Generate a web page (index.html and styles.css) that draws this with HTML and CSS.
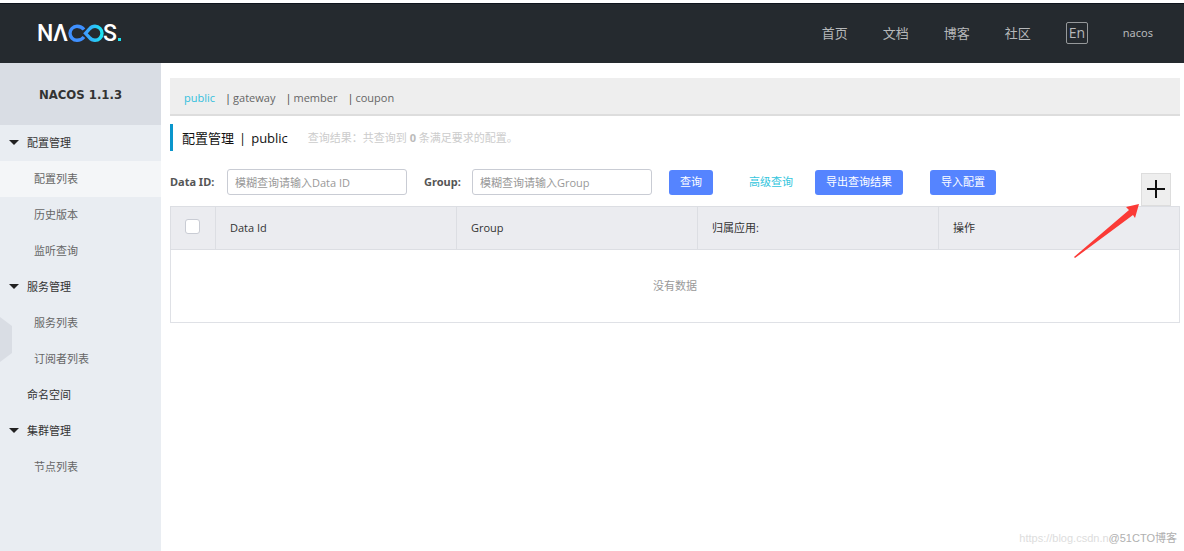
FILE: index.html
```html
<!DOCTYPE html>
<html lang="zh-CN">
<head>
<meta charset="utf-8">
<title>Nacos</title>
<link rel="stylesheet" href="styles.css">
</head>
<body>
<header class="header">
  <a class="logo" href="#" aria-label="Nacos">
    <svg width="90" height="36" viewBox="-1 -6 90 36">
      <defs>
        <linearGradient id="loop" x1="0" x2="1" y1="0" y2="0">
          <stop offset="0" stop-color="#3f9cff"/>
          <stop offset="1" stop-color="#1be3f2"/>
        </linearGradient>
      </defs>
      <text class="logo-text" x="-1" y="19">N</text>
      <text class="logo-text" x="15" y="19">Λ</text>
      <path d="M46 7.500C44 5 41.500 4.300 39 4.300a7 7 0 0 0 0 14c3 0 5-1 7-3.300" fill="none" stroke="#3f90ff" stroke-width="3.400"/>
      <path d="M47.500 11.300L51.500 7C53 5.200 55 4.300 57 4.300a7 7 0 0 1 0 14c-2 0-4-.900-5.500-2.700Z" fill="none" stroke="url(#loop)" stroke-width="3.400"/>
      <text class="logo-text" x="65" y="19">S</text>
      <rect x="80" y="16" width="3" height="3" fill="#1be3f2"/>
    </svg>
  </a>
  <nav class="top-nav">
    <a href="#">首页</a>
    <a href="#">文档</a>
    <a href="#">博客</a>
    <a href="#">社区</a>
    <button class="lang" type="button">En</button>
    <a class="user" href="#">nacos</a>
  </nav>
</header>
<div class="body">
  <aside class="sidebar">
    <h1 class="version">NACOS 1.1.3</h1>
    <nav class="menu">
      <a class="group open" href="#">配置管理</a>
      <a class="item active" href="#">配置列表</a>
      <a class="item" href="#">历史版本</a>
      <a class="item" href="#">监听查询</a>
      <a class="group open" href="#">服务管理</a>
      <a class="item" href="#">服务列表</a>
      <a class="item" href="#">订阅者列表</a>
      <a class="group" href="#">命名空间</a>
      <a class="group open" href="#">集群管理</a>
      <a class="item" href="#">节点列表</a>
    </nav>
    <button class="collapse" type="button" aria-label="收起"></button>
  </aside>
  <main class="main">
    <nav class="spaces">
      <a class="current" href="#">public</a>
      <span class="bar">|</span><a href="#">gateway</a>
      <span class="bar">|</span><a href="#">member</a>
      <span class="bar">|</span><a href="#">coupon</a>
    </nav>
    <div class="title">
      <h2>配置管理</h2><span class="divider">|</span><span class="space">public</span>
      <p class="result">查询结果：共查询到 <strong>0</strong> 条满足要求的配置。</p>
    </div>
    <form class="search">
      <label class="id-label" for="data-id">Data ID:</label>
      <input class="field" id="data-id" type="text" placeholder="模糊查询请输入Data ID">
      <label class="group-label" for="group">Group:</label>
      <input class="field" id="group" type="text" placeholder="模糊查询请输入Group">
      <button class="btn query" type="button">查询</button>
      <a class="advanced" href="#">高级查询</a>
      <button class="btn export" type="button">导出查询结果</button>
      <button class="btn" type="button">导入配置</button>
      <button class="add" type="button" aria-label="新建配置">
        <svg width="18" height="18" viewBox="0 0 18 18"><path d="M9 0v18M0 9h18" stroke="#111" stroke-width="2"/></svg>
      </button>
    </form>
    <table class="table">
      <thead>
        <tr>
          <th class="check"><input type="checkbox" aria-label="全选"></th>
          <th>Data Id</th>
          <th>Group</th>
          <th>归属应用:</th>
          <th>操作</th>
        </tr>
      </thead>
      <tbody>
        <tr><td class="empty" colspan="5">没有数据</td></tr>
      </tbody>
    </table>
    <svg class="arrow" width="68" height="56" viewBox="0 0 68 56"><path d="M66 1L53 4L56 7L1 54L2 55L60 12L62 15Z" fill="#fb3a36"/></svg>
  </main>
</div>
<div class="marks"><span class="mark-url">https://blog.csdn.n</span><span class="mark-name">@51CTO博客</span></div>
</body>
</html>
```
FILE: styles.css
```css
* { box-sizing: border-box; }
body {
  margin: 0;
  min-height: 100vh;
  display: flex;
  flex-direction: column;
  position: relative;
  color: #333;
  background: #fff;
  font: 11px/16px "Open Sans", "Noto Sans CJK SC", sans-serif;
}
a { color: inherit; text-decoration: none; }
button, input { font: inherit; }
button { cursor: pointer; }

.header {
  display: flex;
  align-items: center;
  justify-content: space-between;
  height: 60px;
  margin-top: 3px;
  padding: 0 31px 0 37px;
  background: #252a2f;
  border-top: 1px solid #0f141d;
}
.logo { display: flex; }
.logo svg { overflow: visible; }
.logo-text { font: 500 23px Roboto, sans-serif; fill: #fff; }
.top-nav {
  display: flex;
  align-items: center;
  gap: 35px;
  font-size: 13px;
  line-height: 18px;
  color: #b6b8ba;
}
.top-nav a { padding-bottom: 2px; }
.lang {
  width: 22px;
  height: 22px;
  margin-bottom: 2px;
  padding: 0;
  font-size: 14px;
  line-height: 18px;
  color: #b6b8ba;
  background: none;
  border: 1px solid #96999b;
  border-radius: 2px;
}
.user { font-family: "Noto Sans", sans-serif; font-size: 11px; }

.body { display: flex; flex: 1; }
.sidebar {
  position: relative;
  flex: 0 0 161px;
  background: #e9edf2;
}
.version {
  margin: 0;
  padding: 21px 0 19px;
  font-family: "DejaVu Sans Condensed", sans-serif;
  font-size: 13px;
  line-height: 22px;
  text-align: center;
  background: #d9dde4;
}
.menu { display: flex; flex-direction: column; }
.menu a { position: relative; padding: 10px 0 10px 34px; color: #666; }
.menu .group { padding-left: 27px; color: #333; }
.menu .active { background: #f4f6f8; }
.open::before {
  content: "";
  position: absolute;
  left: 9px;
  top: 15px;
  border: 5px solid transparent;
  border-top-color: #222;
  border-bottom: 0;
}
.collapse {
  position: absolute;
  left: 0;
  top: 254px;
  width: 12px;
  height: 45px;
  padding: 0;
  border: 0;
  background: #d9dde4;
  clip-path: polygon(0 0, 100% 20%, 100% 80%, 0 100%);
}

.main {
  position: relative;
  flex: 1;
  min-width: 0;
  padding: 15px 4px 0 9px;
}
.spaces {
  display: flex;
  padding: 12px 14px 8px;
  color: #666;
  background: #eee;
  border-bottom: 2px solid #ddd;
}
.spaces .bar { margin: 0 2px 0 10px; color: #444; }
.spaces .current { color: #33bfdd; }
.title {
  display: flex;
  align-items: center;
  height: 27px;
  margin-top: 8px;
  padding-left: 9px;
  font-size: 13px;
  color: #111;
  border-left: 3px solid #0a96cc;
}
.title h2 { margin: 0; font-size: 13px; font-weight: 400; }
.divider { margin: 0 5px; }
.result { margin: 0 0 0 20px; font-size: 11px; color: #ccc; }
.result strong { color: #bbb; }

.search {
  display: flex;
  align-items: center;
  margin-top: 18px;
  padding-right: 9px;
}
.search label { font-family: "Noto Sans", sans-serif; font-weight: 700; color: #555; white-space: nowrap; }
.id-label { width: 57px; }
.group-label { width: 48px; margin-left: 17px; }
.field {
  width: 180px;
  height: 26px;
  padding: 0 7px;
  color: #333;
  background: #fff;
  border: 1px solid #c9ccd4;
  border-radius: 3px;
}
.field::placeholder { color: #999; opacity: 1; }
.btn {
  height: 25px;
  padding: 0 11px;
  color: #fff;
  background: #5584ff;
  border: 0;
  border-radius: 3px;
}
.query { margin-left: 17px; }
.advanced { margin: 0 22px 0 36px; color: #33c5dd; }
.export { margin-right: 27px; }
.add {
  display: flex;
  align-items: center;
  justify-content: center;
  width: 30px;
  height: 33px;
  margin: 3px 0 -11px auto;
  padding: 0;
  background: #eee;
  border: 1px solid #ddd;
}

.table {
  width: 100%;
  margin-top: 11px;
  table-layout: fixed;
  border-collapse: collapse;
  border: 1px solid #dfe1e6;
}
.table th {
  height: 43px;
  padding: 0 14px;
  font-weight: 400;
  text-align: left;
  background: #ebecf0;
  border: 1px solid #dcdee3;
}
.table .check { width: 45px; }
.check input {
  display: block;
  appearance: none;
  width: 15px;
  height: 15px;
  margin: 0 0 4px;
  background: #fff;
  border: 1px solid #c9ccd4;
  border-radius: 3px;
}
.table .empty { height: 73px; padding: 0; text-align: center; color: #999; }
.arrow { position: absolute; right: 43px; top: 140px; }

.marks {
  position: absolute;
  right: 7px;
  bottom: 5px;
  display: flex;
  font-family: "Liberation Sans", "Noto Sans CJK SC", sans-serif;
  font-size: 11px;
}
.mark-url { color: #ddd; }
.mark-name { color: #b0b0b0; }
```
